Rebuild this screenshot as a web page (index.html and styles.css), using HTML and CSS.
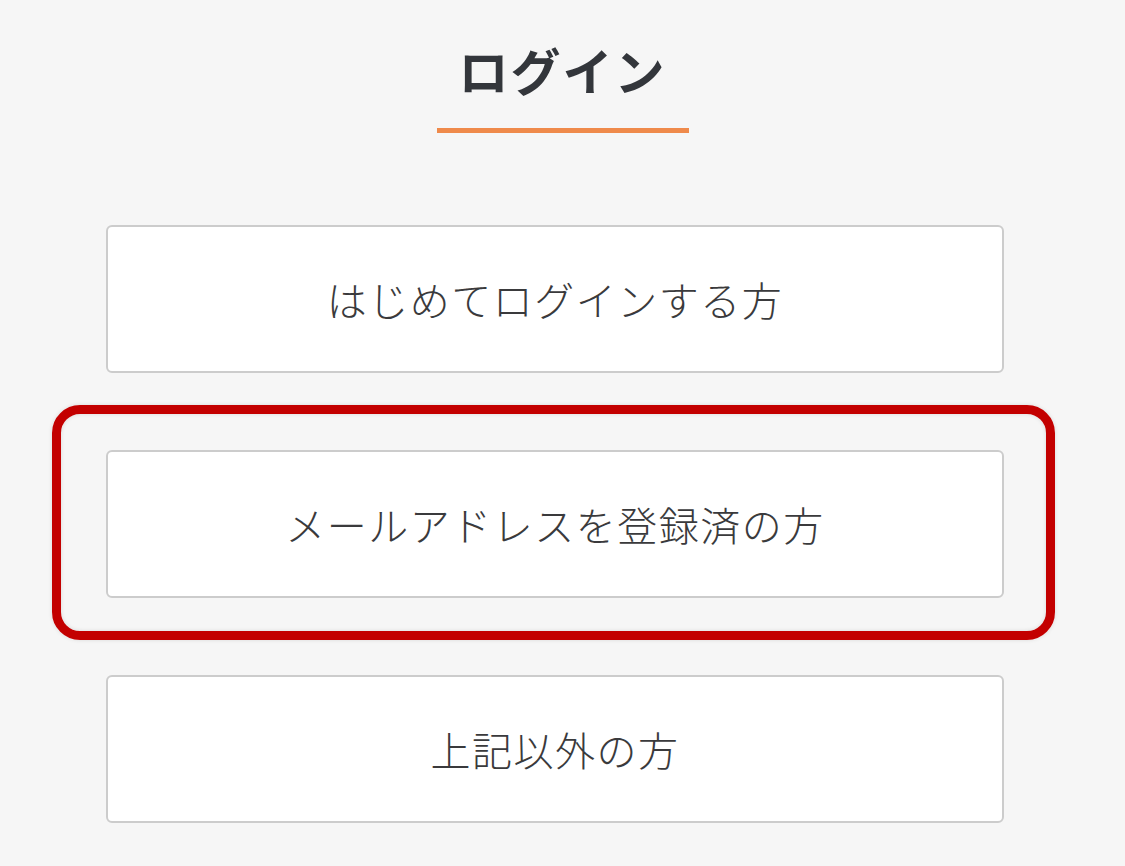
FILE: index.html
```html
<!DOCTYPE html>
<html lang="ja">

<head>
    <meta charset="UTF-8">
    <link rel="stylesheet" href="styles.css">
    <title>ログイン</title>
</head>

<body>
    <div class="login-page">
        <div class="login-head">
            <h1>ログイン</h1>
            <div class="login-rule"></div>
        </div>
        <div class="login-list">
            <a class="login-btn" href="#">はじめてログインする方</a>
            <div class="login-mark">
                <a class="login-btn" href="#">メールアドレスを登録済の方</a>
            </div>
            <a class="login-btn" href="#">上記以外の方</a>
        </div>
    </div>
</body>

</html>
```
FILE: styles.css
```css
body {
    margin: 0;
    background: #f6f6f6;
    font-family: "Noto Sans CJK JP", "Noto Sans", sans-serif;
    color: #3a3a3c;
}

.login-page {
    padding-top: 44px;
}

.login-head {
    display: flex;
    flex-direction: column;
    align-items: center;
}

.login-head h1 {
    margin: 0;
    font-size: 50px;
    line-height: 50px;
    font-weight: 700;
    letter-spacing: 2px;
    color: #33363b;
}

.login-rule {
    width: 252px;
    height: 5px;
    margin-top: 34px;
    background: #ef8a4b;
}

.login-list {
    display: flex;
    flex-direction: column;
    gap: 77px;
    width: 898px;
    margin: 92px 0 0 106px;
}

.login-btn {
    box-sizing: border-box;
    display: flex;
    align-items: center;
    justify-content: center;
    height: 148px;
    background: #fff;
    border: 2px solid #cccccc;
    border-radius: 6px;
    font-size: 40px;
    font-weight: 300;
    letter-spacing: 1.5px;
    color: #3a3a3c;
    text-decoration: none;
}

/* red annotation frame round the second button */
.login-mark {
    position: relative;
}

.login-mark::before {
    content: "";
    position: absolute;
    top: -45px;
    right: -51px;
    bottom: -42px;
    left: -54px;
    border: 9px solid #c30000;
    border-radius: 28px;
    box-shadow: inset 0 0 4px rgba(0, 0, 0, 0.12), 0 0 4px rgba(0, 0, 0, 0.12);
    pointer-events: none;
}
```
